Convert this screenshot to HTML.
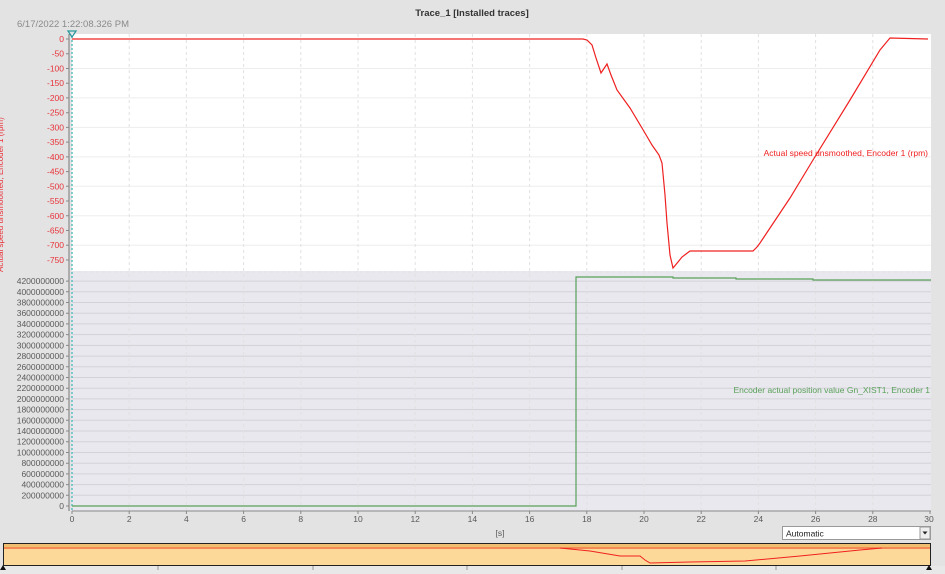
<!DOCTYPE html>
<html><head><meta charset="utf-8"><style>
body{margin:0;width:945px;height:574px;background:#e3e3e3;overflow:hidden;font-family:"Liberation Sans",sans-serif}
svg{display:block}
</style></head><body>
<svg width="945" height="574" xmlns="http://www.w3.org/2000/svg" font-family="Liberation Sans, sans-serif">
<rect width="945" height="574" fill="#e3e3e3"/>
<text x="472" y="16" font-size="9.5" font-weight="bold" fill="#333" text-anchor="middle">Trace_1 [Installed traces]</text>
<text x="17" y="27" font-size="9.5" fill="#8a8a8a">6/17/2022  1:22:08.326 PM</text>
<rect x="72" y="34" width="859" height="237" fill="#fff"/>
<g stroke="#ededed" stroke-width="1">
<line x1="72" x2="931" y1="68.5" y2="68.5"/><line x1="72" x2="931" y1="97.9" y2="97.9"/><line x1="72" x2="931" y1="127.4" y2="127.4"/><line x1="72" x2="931" y1="156.9" y2="156.9"/><line x1="72" x2="931" y1="186.3" y2="186.3"/><line x1="72" x2="931" y1="215.8" y2="215.8"/><line x1="72" x2="931" y1="245.2" y2="245.2"/>
</g>
<rect x="72" y="271" width="859" height="240" fill="#e9e8ee"/>
<g stroke="#d3d2d8" stroke-width="1">
<line x1="72" x2="931" y1="281.1" y2="281.1"/><line x1="72" x2="931" y1="291.8" y2="291.8"/><line x1="72" x2="931" y1="302.5" y2="302.5"/><line x1="72" x2="931" y1="313.2" y2="313.2"/><line x1="72" x2="931" y1="323.9" y2="323.9"/><line x1="72" x2="931" y1="334.6" y2="334.6"/><line x1="72" x2="931" y1="345.4" y2="345.4"/><line x1="72" x2="931" y1="356.1" y2="356.1"/><line x1="72" x2="931" y1="366.8" y2="366.8"/><line x1="72" x2="931" y1="377.5" y2="377.5"/><line x1="72" x2="931" y1="388.2" y2="388.2"/><line x1="72" x2="931" y1="398.9" y2="398.9"/><line x1="72" x2="931" y1="409.6" y2="409.6"/><line x1="72" x2="931" y1="420.3" y2="420.3"/><line x1="72" x2="931" y1="431" y2="431"/><line x1="72" x2="931" y1="441.7" y2="441.7"/><line x1="72" x2="931" y1="452.5" y2="452.5"/><line x1="72" x2="931" y1="463.2" y2="463.2"/><line x1="72" x2="931" y1="473.9" y2="473.9"/><line x1="72" x2="931" y1="484.6" y2="484.6"/><line x1="72" x2="931" y1="495.3" y2="495.3"/>
</g>
<g stroke="#e2e2e2" stroke-dasharray="3,3">
<line x1="129.2" x2="129.2" y1="34" y2="511"/><line x1="186.4" x2="186.4" y1="34" y2="511"/><line x1="243.6" x2="243.6" y1="34" y2="511"/><line x1="300.8" x2="300.8" y1="34" y2="511"/><line x1="358" x2="358" y1="34" y2="511"/><line x1="415.2" x2="415.2" y1="34" y2="511"/><line x1="472.4" x2="472.4" y1="34" y2="511"/><line x1="529.6" x2="529.6" y1="34" y2="511"/><line x1="586.8" x2="586.8" y1="34" y2="511"/><line x1="644" x2="644" y1="34" y2="511"/><line x1="701.2" x2="701.2" y1="34" y2="511"/><line x1="758.4" x2="758.4" y1="34" y2="511"/><line x1="815.6" x2="815.6" y1="34" y2="511"/><line x1="872.8" x2="872.8" y1="34" y2="511"/>
<line x1="72" x2="931" y1="272" y2="272"/>
</g>
<line x1="69" x2="69" y1="34" y2="511" stroke="#777"/>
<g stroke="#888">
<path d="M66 39h3M66 53.7h3M66 68.5h3M66 83.2h3M66 97.9h3M66 112.7h3M66 127.4h3M66 142.1h3M66 156.9h3M66 171.6h3M66 186.3h3M66 201h3M66 215.8h3M66 230.5h3M66 245.2h3M66 260h3"/>
<path d="M66 281.1h3M66 291.8h3M66 302.5h3M66 313.2h3M66 323.9h3M66 334.6h3M66 345.4h3M66 356.1h3M66 366.8h3M66 377.5h3M66 388.2h3M66 398.9h3M66 409.6h3M66 420.3h3M66 431h3M66 441.7h3M66 452.5h3M66 463.2h3M66 473.9h3M66 484.6h3M66 495.3h3M66 506h3"/>
<line x1="72" x2="931" y1="511" y2="511"/>
<path d="M72 511v3M129.2 511v3M186.4 511v3M243.6 511v3M300.8 511v3M358 511v3M415.2 511v3M472.4 511v3M529.6 511v3M586.8 511v3M644 511v3M701.2 511v3M758.4 511v3M815.6 511v3M872.8 511v3M930 511v3"/>
</g>
<line x1="72" x2="72" y1="36" y2="511" stroke="#5bbfc4" stroke-width="1.5" stroke-dasharray="2,2"/>
<path d="M68 31h8l-4 6z" fill="none" stroke="#2a9a9f" stroke-width="1.3"/>
<g font-size="8.5" fill="#e8323a" text-anchor="end">
<text x="64" y="42">0</text><text x="64" y="56.7">-50</text><text x="64" y="71.5">-100</text><text x="64" y="86.2">-150</text><text x="64" y="100.9">-200</text><text x="64" y="115.7">-250</text><text x="64" y="130.4">-300</text><text x="64" y="145.1">-350</text><text x="64" y="159.9">-400</text><text x="64" y="174.6">-450</text><text x="64" y="189.3">-500</text><text x="64" y="204">-550</text><text x="64" y="218.8">-600</text><text x="64" y="233.5">-650</text><text x="64" y="248.2">-700</text><text x="64" y="263">-750</text>
</g>
<text transform="translate(3,272) rotate(-90)" font-size="8" fill="#e8323a">Actual speed unsmoothed, Encoder 1 (rpm)</text>
<g font-size="8.5" fill="#5a5a5a" text-anchor="end">
<text x="64" y="284.1">4200000000</text><text x="64" y="294.8">4000000000</text><text x="64" y="305.5">3800000000</text><text x="64" y="316.2">3600000000</text><text x="64" y="326.9">3400000000</text><text x="64" y="337.6">3200000000</text><text x="64" y="348.4">3000000000</text><text x="64" y="359.1">2800000000</text><text x="64" y="369.8">2600000000</text><text x="64" y="380.5">2400000000</text><text x="64" y="391.2">2200000000</text><text x="64" y="401.9">2000000000</text><text x="64" y="412.6">1800000000</text><text x="64" y="423.3">1600000000</text><text x="64" y="434">1400000000</text><text x="64" y="444.7">1200000000</text><text x="64" y="455.5">1000000000</text><text x="64" y="466.2">800000000</text><text x="64" y="476.9">600000000</text><text x="64" y="487.6">400000000</text><text x="64" y="498.3">200000000</text><text x="64" y="509">0</text>
</g>
<g font-size="8.5" fill="#5a5a5a" text-anchor="middle">
<text x="72" y="522">0</text><text x="129.2" y="522">2</text><text x="186.4" y="522">4</text><text x="243.6" y="522">6</text><text x="300.8" y="522">8</text><text x="358" y="522">10</text><text x="415.2" y="522">12</text><text x="472.4" y="522">14</text><text x="529.6" y="522">16</text><text x="586.8" y="522">18</text><text x="644" y="522">20</text><text x="701.2" y="522">22</text><text x="758.4" y="522">24</text><text x="815.6" y="522">26</text><text x="872.8" y="522">28</text><text x="929" y="522">30</text>
<text x="500" y="536">[s]</text>
</g>
<polyline fill="none" stroke="#ef2020" stroke-width="1.2" points="72,39 583,39 587,40 592,45 596,58 601,73 607,64 611,75 617,90 630,108 642,128 652,145 659,155 662,163 665,195 667,223 670,255 673,268 678,262 682,257 690,251 753,251 757,247 760,243 790,198 813,160 850,100 880,50 890,38 928,39"/>
<polyline fill="none" stroke="#5aa05a" stroke-width="1.2" points="72,506 576,506 576,277 673,277 673,278 736,278 736,279 813,279 813,280 931,280"/>
<text x="928" y="156" font-size="8.5" fill="#ef2020" text-anchor="end">Actual speed unsmoothed, Encoder 1 (rpm)</text>
<text x="930" y="393" font-size="8.5" fill="#5aa05a" text-anchor="end">Encoder actual position value Gn_XIST1, Encoder 1</text>
<rect x="782.5" y="526.5" width="148" height="13" fill="#fff" stroke="#999"/>
<text x="786" y="536.5" font-size="8.5" fill="#222">Automatic</text>
<rect x="920" y="527" width="10" height="12" fill="#eee" stroke="#999"/>
<path d="M922.5 531.5h5l-2.5 3z" fill="#222"/>
<rect x="3.5" y="543.5" width="927" height="22" fill="#fcd998" stroke="#222"/>
<rect x="4" y="544" width="926" height="3" fill="#f0c070"/>
<line x1="4" x2="930" y1="548" y2="548" stroke="#f05a2a" stroke-width="1.3"/>
<polyline fill="none" stroke="#ef2020" stroke-width="1" points="560,548 590,551 620,556 640,556 645,560 650,563 690,562 745,561 800,556 860,550 882,548"/>
<rect x="0" y="566" width="945" height="8" fill="#e8e8e8"/>
<g stroke="#999"><path d="M158 566v4M313 566v4M467 566v4M622 566v4M776 566v4"/></g>
<path d="M0 570l3-5 3 5zM926 570l3-5 3 5z" fill="#111"/>
</svg>
</body></html>
